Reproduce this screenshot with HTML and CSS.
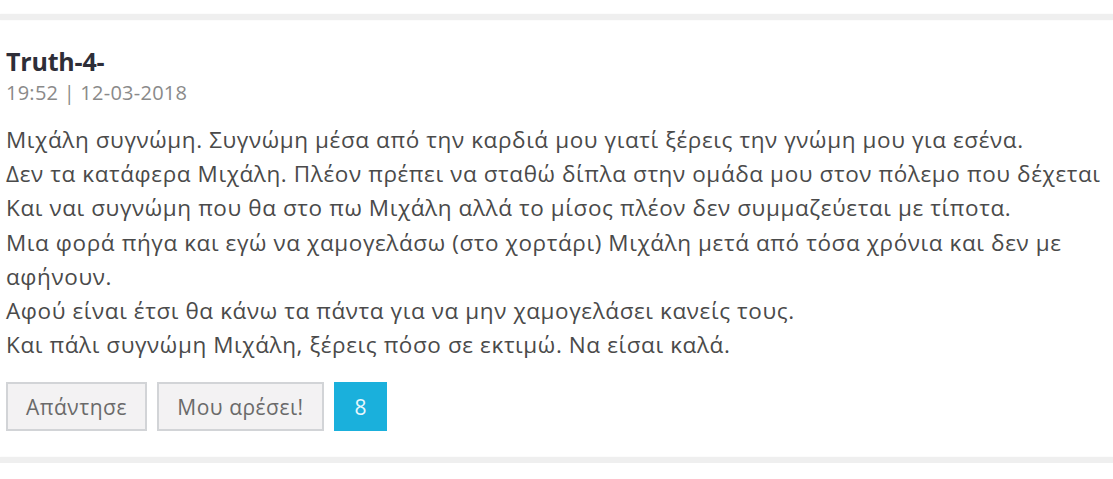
FILE: index.html
```html
<!DOCTYPE html>
<html lang="el">
<head>
<meta charset="utf-8">
<title>Σχόλιο</title>
<link rel="stylesheet" href="styles.css">
</head>
<body>
<div class="sep sep-top"></div>
<article class="comment">
  <h3 class="author">Truth-4-</h3>
  <div class="meta">19:52 | 12-03-2018</div>
  <div class="text">
    <p>Μιχάλη συγνώμη. Συγνώμη μέσα από την καρδιά μου γιατί ξέρεις την γνώμη μου για εσένα.</p>
    <p>Δεν τα κατάφερα Μιχάλη. Πλέον πρέπει να σταθώ δίπλα στην ομάδα μου στον πόλεμο που δέχεται</p>
    <p>Και ναι συγνώμη που θα στο πω Μιχάλη αλλά το μίσος πλέον δεν συμμαζεύεται με τίποτα.</p>
    <p>Μια φορά πήγα και εγώ να χαμογελάσω (στο χορτάρι) Μιχάλη μετά από τόσα χρόνια και δεν με αφήνουν.</p>
    <p>Αφού είναι έτσι θα κάνω τα πάντα για να μην χαμογελάσει κανείς τους.</p>
    <p>Και πάλι συγνώμη Μιχάλη, ξέρεις πόσο σε εκτιμώ. Να είσαι καλά.</p>
  </div>
  <div class="actions">
    <button class="btn btn-reply">Απάντησε</button>
    <button class="btn btn-like">Μου αρέσει!</button>
    <span class="count">8</span>
  </div>
</article>
<div class="sep sep-bottom"></div>
</body>
</html>
```
FILE: styles.css
```css
html, body {
  margin: 0;
  padding: 0;
  background: #ffffff;
}
body {
  font-family: "Open Sans", "Noto Sans", sans-serif;
  color: #444;
  overflow: hidden;
}
.sep {
  height: 6px;
  background: #efefef;
  box-shadow: 0 0 2px #f3f3f3;
}
.sep-top {
  margin-top: 14px;
}
.comment {
  padding: 26px 0 0 6px;
}
.author {
  margin: 0;
  font-size: 25px;
  line-height: 30px;
  font-weight: 700;
  color: #2e2e38;
  letter-spacing: -0.2px;
}
.meta {
  margin-top: 3px;
  font-size: 20px;
  line-height: 28px;
  color: #8a8a8a;
  letter-spacing: 0.25px;
}
.text {
  margin-top: 16px;
  font-size: 22.5px;
  line-height: 34.2px;
  letter-spacing: 0.6px;
  color: #4a4a4a;
  width: 1110px;
}
.text p {
  margin: 0;
}
.actions {
  display: flex;
  gap: 10px;
  margin-top: 20px;
}
.btn {
  font-family: "Open Sans", "Noto Sans", sans-serif;
  font-size: 21px;
  color: #6a6a6a;
  background: #f3f2f3;
  border: 2px solid #d2d4d7;
  border-radius: 0;
  height: 49px;
  padding: 0;
  letter-spacing: 0.5px;
}
.btn-reply {
  width: 141px;
}
.btn-like {
  width: 167px;
}
.count {
  display: flex;
  align-items: center;
  justify-content: center;
  width: 53px;
  height: 49px;
  background: #1ab0dc;
  color: #e8f7fc;
  font-size: 21px;
}
.sep-bottom {
  margin-top: 26px;
}
```
